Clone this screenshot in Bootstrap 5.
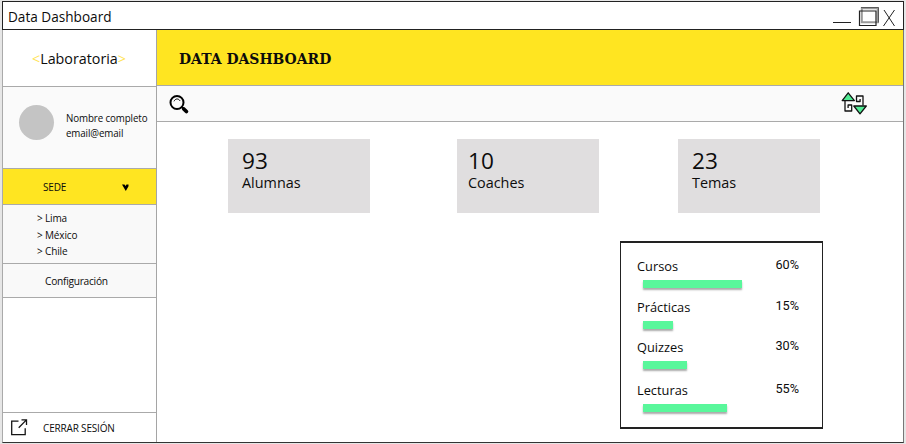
<!DOCTYPE html>
<html lang="es">
<head>
<meta charset="utf-8">
<meta name="viewport" content="width=device-width, initial-scale=1">
<title>Data Dashboard</title>
<link href="https://cdn.jsdelivr.net/npm/bootstrap@5.3.0/dist/css/bootstrap.min.css" rel="stylesheet">
<style>
body{background:#e6e6e6;font-family:"Open Sans","Noto Sans",sans-serif;color:#0c0c0c;height:444px;padding:1px 2px 1px 2px;line-height:1}
.window-frame{width:902px;height:442px;background:#fff;border-left:1px solid #aaa;border-right:1px solid #777;border-bottom:1px solid #333}
.title-bar{height:29px;margin:0 -1px;border:1px solid #222;padding:2px 1px 0 5px;font-size:13.6px}
.side{width:154px;border-right:1px solid #a5a5a5}
.side>*{border-bottom:1px solid #aaa}
.brand{height:57px;font-size:14.3px;padding:2px 1px 0 0}
.brand span{color:#ffe352}
.profile{height:82px;background:#fafafa;font-size:10.5px;letter-spacing:-.12px;line-height:15px;padding-left:16px}
.profile-text{margin:24px 0 0 12px;white-space:nowrap;transform:scaleX(.93);transform-origin:left}
.avatar{width:35px;height:35px;background:#c4c4c4;margin-top:18px}
.sede{height:36px;background:#ffe521;font-size:10px;letter-spacing:-.15px;padding:1px 0 0 40px}
.places{height:59px;background:#f9f9f9;font-size:10px;letter-spacing:-.15px;line-height:16.5px;padding:5px 0 0 34px}
.config{height:34px;background:#f9f9f9;font-size:10.2px;letter-spacing:-.27px;padding:1px 0 0 42px}
.side>.logout{height:30px;font-size:10px;letter-spacing:-.17px;padding:1px 0 0 8px;border-top:1px solid #aaa;border-bottom:0}
.hero{height:56px;background:#ffe521;border-bottom:1px solid #aaa;padding:3px 0 0 22px}
.hero h1{font:bold 15.2px "DejaVu Serif",serif;transform:scaleX(.918);transform-origin:left;white-space:nowrap}
.tools{height:36px;background:#fafafa;border-bottom:1px solid #aaa;padding:0 36px 0 11px}
.stats{padding:17px 0 0 71px}
.stat{width:142px;height:74px;background:#e0dedf;padding:10px 0 0 14px}
.stat strong{font-size:22.6px;font-weight:400;line-height:24px}
.stat span{font-size:14.4px;line-height:20px}
.stat-b{margin-left:87px;padding-left:11px}
.stat-c{margin-left:79px}
.progress-panel{width:203px;height:188px;border:solid #222;border-width:2px 1.5px;margin:28px 0 0 463px;padding:17px 23px 0 16px}
.metric{height:41px;font-size:12.8px}
.metric:nth-child(2){height:40px}
.metric:last-child{padding-top:2px}
.metric-pct{font-family:Roboto,sans-serif;font-size:12.7px;margin-top:-1px}
.metric-bar{height:8px;background:#59f79b;margin:7px 0 0 6px;box-shadow:0 2px 2px #aaa}
</style>
<script src="https://cdn.jsdelivr.net/npm/bootstrap@5.3.0/dist/js/bootstrap.bundle.min.js"></script>
</head>
<body class="overflow-hidden">
<div class="window-frame d-flex flex-column">
  <header class="title-bar d-flex align-items-center justify-content-between flex-shrink-0">
    <span>Data Dashboard</span>
    <svg width="72" height="27" viewBox="830 2 72 27" fill="none" stroke="#222">
      <path d="M833 21.500h18"/><path d="M861.800 7.200h16v14h-16z" stroke="#999" stroke-width="2"/><path d="M861 6.500h17.500v15" stroke="#444" stroke-width=".8"/><path d="M859.500 10h16.500v14.500h-16.500z" stroke-width="1.200"/><path d="M884 9l10.500 16M894.500 9L883.500 25"/>
    </svg>
  </header>
  <div class="d-flex flex-grow-1">
    <aside class="side d-flex flex-column flex-shrink-0">
      <div class="brand d-flex align-items-center justify-content-center"><span>&lt;</span>Laboratoria<span>&gt;</span></div>
      <div class="profile d-flex align-items-start">
        <div class="avatar rounded-circle flex-shrink-0"></div>
        <div class="profile-text">Nombre completo<br>email@email</div>
      </div>
      <div class="sede d-flex align-items-center">SEDE
        <svg class="ms-auto me-4" width="12" height="12" viewBox="120 181 12 12"><path d="M122 184.600h2.500l1 1.400 1-1.400h2v1.600l-2.700 4.800-2.800-4.800z"/></svg>
      </div>
      <div class="places"><div>&gt; Lima</div><div>&gt; México</div><div>&gt; Chile</div></div>
      <div class="config d-flex align-items-center">Configuración</div>
      <div class="logout d-flex align-items-center mt-auto">
        <svg width="32" height="18" viewBox="11 419 32 18" fill="none" stroke="#151515" stroke-width="1.300"><path d="M18.500 421.200h-6.800v13.500h13.500v-6.500M21.500 419.900h5v5M26.200 420.100l-7.500 7.700"/></svg>
        CERRAR SESIÓN
      </div>
    </aside>
    <main class="flex-grow-1">
      <div class="hero d-flex align-items-center"><h1 class="m-0">DATA DASHBOARD</h1></div>
      <div class="tools d-flex align-items-center justify-content-between">
        <svg width="22" height="22" viewBox="168 93 22 22" fill="none" stroke="#000"><circle cx="177" cy="102.500" r="6.500" stroke-width="2"/><path d="M174 101.300c1.500-3 4.300-3 6-.500" stroke-width="1"/><path d="M182 107.200l1.800 1.600" stroke-width="2.200"/><path d="M183.800 109l2.600 2.500" stroke-width="3.800" stroke-linecap="round"/></svg>
        <svg width="26" height="26" viewBox="841 91 26 26" fill="none" stroke="#111" stroke-width="1.300" stroke-linejoin="round"><path d="M845 101v10h6.700v-6h-3.600v3M863 105.500v-9.500h-6.500v5.500h3.600v-2.500"/><path d="M848.200 92.800l6.200 7.800h-12.200zM853.800 106h12.500l-6.300 7.800z" fill="#50ec94"/></svg>
      </div>
      <section class="stats d-flex">
        <div class="stat d-flex flex-column"><strong>93</strong><span>Alumnas</span></div>
        <div class="stat stat-b d-flex flex-column"><strong>10</strong><span>Coaches</span></div>
        <div class="stat stat-c d-flex flex-column"><strong>23</strong><span>Temas</span></div>
      </section>
      <section class="progress-panel">
        <div class="metric"><div class="d-flex justify-content-between"><span>Cursos</span><span class="metric-pct">60%</span></div><div class="metric-bar" style="width:99px"></div></div>
        <div class="metric"><div class="d-flex justify-content-between"><span>Prácticas</span><span class="metric-pct">15%</span></div><div class="metric-bar" style="width:30px"></div></div>
        <div class="metric"><div class="d-flex justify-content-between"><span>Quizzes</span><span class="metric-pct">30%</span></div><div class="metric-bar" style="width:44px"></div></div>
        <div class="metric"><div class="d-flex justify-content-between"><span>Lecturas</span><span class="metric-pct">55%</span></div><div class="metric-bar" style="width:84px"></div></div>
      </section>
    </main>
  </div>
</div>
</body>
</html>
